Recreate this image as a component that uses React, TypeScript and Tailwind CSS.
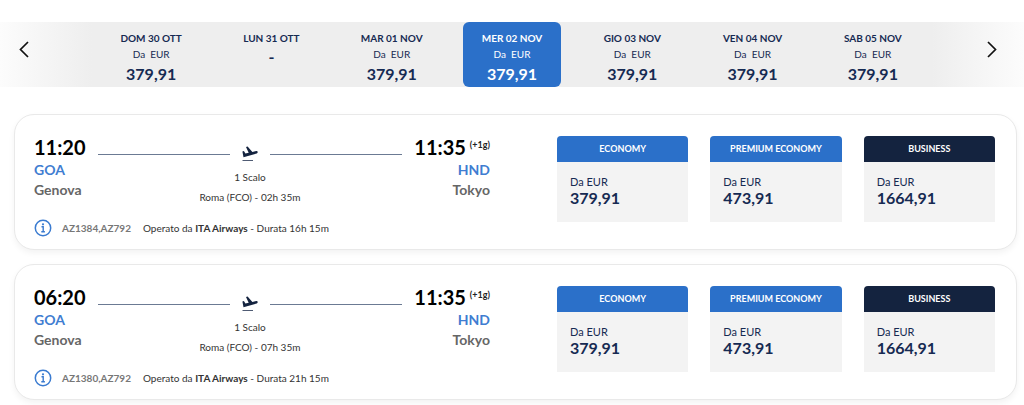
interface Day {
  label: string
  price: string | null
  selected?: boolean
}

interface Fare {
  name: string
  price: string
  dark?: boolean
}

interface Flight {
  departure: string
  arrival: string
  stopover: string
  codes: string
  duration: string
}

const days: Day[] = [
  { label: 'DOM 30 OTT', price: '379,91' },
  { label: 'LUN 31 OTT', price: null },
  { label: 'MAR 01 NOV', price: '379,91' },
  { label: 'MER 02 NOV', price: '379,91', selected: true },
  { label: 'GIO 03 NOV', price: '379,91' },
  { label: 'VEN 04 NOV', price: '379,91' },
  { label: 'SAB 05 NOV', price: '379,91' },
]

const fares: Fare[] = [
  { name: 'ECONOMY', price: '379,91' },
  { name: 'PREMIUM ECONOMY', price: '473,91' },
  { name: 'BUSINESS', price: '1664,91', dark: true },
]

const flights: Flight[] = [
  { departure: '11:20', arrival: '11:35', stopover: '02h 35m', codes: 'AZ1384,AZ792', duration: '16h 15m' },
  { departure: '06:20', arrival: '11:35', stopover: '07h 35m', codes: 'AZ1380,AZ792', duration: '21h 15m' },
]

function Chevron({ flip }: { flip?: boolean }) {
  return (
    <svg width="10" height="18" viewBox="0 0 10 18" fill="none" stroke="#111" strokeWidth="1.7" aria-hidden="true">
      <path d={flip ? 'M1 1 8.500 8.500 1 16' : 'M9 1 1.500 8.500 9 16'} />
    </svg>
  )
}

function PlaneIcon() {
  return (
    <svg width="16" height="16" viewBox="0 0 16 16" className="shrink-0" aria-hidden="true">
      <path
        fill="#14233f"
        d="M15.700 5.800c-.2-.7-.8-.9-1.400-.8l-3.900 1L5.600.5 4 .9l2.700 5.900-3.300.8L1.900 5.100.4 5.500l1.100 5.700 13.200-3.700c.7-.2 1.200-1 1-1.700z"
      />
      <path stroke="#4f5b73" strokeWidth="1" d="M.5 14.500h10.500" />
    </svg>
  )
}

function InfoIcon() {
  return (
    <svg width="18" height="18" viewBox="0 0 18 18" fill="none" aria-hidden="true">
      <circle cx="9" cy="9" r="7.700" stroke="#3a7bd0" strokeWidth="1.500" />
      <circle cx="9" cy="5.300" r="1.100" fill="#3a7bd0" />
      <path d="M7.500 7.800H9.200v4.800M7.300 12.700h3.600" stroke="#3a7bd0" strokeWidth="1.400" />
    </svg>
  )
}

function DayButton({ day }: { day: Day }) {
  return (
    <button
      type="button"
      aria-pressed={!!day.selected}
      className={`mx-auto flex w-[98px] flex-col items-center rounded-md pt-2 pb-[2px] ${
        day.selected ? 'bg-[#2b70c9] text-white' : 'text-[#162a52]'
      }`}
    >
      <span className="text-[10px] leading-4 font-bold">{day.label}</span>
      {day.price ? (
        <>
          <span className="text-[10px] leading-[17px] whitespace-pre">Da  EUR</span>
          <span className="text-base leading-[22px] font-bold">{day.price}</span>
        </>
      ) : (
        <span className="text-base leading-[22px] font-bold">-</span>
      )}
    </button>
  )
}

function FareButton({ fare }: { fare: Fare }) {
  return (
    <button type="button" className="flex flex-col overflow-hidden rounded-t bg-[#f3f3f3] text-left text-[#162a52]">
      <span
        className={`block w-full text-center text-[9px] leading-[26px] font-bold text-white ${
          fare.dark ? 'bg-[#14233f]' : 'bg-[#2b70c9]'
        }`}
      >
        {fare.name}
      </span>
      <span className="block px-[13px] pt-3 pb-4">
        <span className="block text-[11px] leading-4">Da EUR</span>
        <span className="block text-base leading-4 font-bold">{fare.price}</span>
      </span>
    </button>
  )
}

function FlightCard({ flight }: { flight: Flight }) {
  return (
    <article className="grid grid-cols-[456fr_438fr] gap-[67px] rounded-[20px] border border-[#e9e9e9] bg-white pt-[21px] pr-[21px] pb-[11px] pl-[19px] shadow-[0_3px_6px_rgba(0,0,0,0.05)]">
      <div>
        <div className="flex">
          <div>
            <p className="text-xl leading-[22px] font-bold text-black">{flight.departure}</p>
            <p className="pt-[2px] text-sm leading-5 font-bold text-[#3f7dd1]">GOA</p>
            <p className="text-sm leading-5 font-bold text-[#666]">Genova</p>
          </div>

          <div className="mx-3 flex-1 pt-2 text-center text-[10px] text-[#333]">
            <div className="mb-[3px] flex h-5 items-center gap-3">
              <span className="h-px flex-1 bg-[#6b7a93]" />
              <PlaneIcon />
              <span className="h-px flex-1 bg-[#6b7a93]" />
            </div>
            <p className="leading-5">1 Scalo</p>
            <p className="leading-5">Roma (FCO) - {flight.stopover}</p>
          </div>

          <div className="text-right">
            <p className="flex items-start gap-1 text-xl leading-[22px] font-bold text-black">
              {flight.arrival}
              <span className="text-[9px] leading-[18px] text-[#222]">(+1g)</span>
            </p>
            <p className="pt-[2px] text-sm leading-5 font-bold text-[#3f7dd1]">HND</p>
            <p className="text-sm leading-5 font-bold text-[#666]">Tokyo</p>
          </div>
        </div>

        <div className="mt-[11px] flex h-5 items-center text-[10px] text-[#333]">
          <button type="button" aria-label="Informazioni sul volo" className="mr-[10px]">
            <InfoIcon />
          </button>
          <span className="mr-3 font-bold text-[#777]">{flight.codes}</span>
          <span>
            Operato da <b>ITA Airways</b> - Durata {flight.duration}
          </span>
        </div>
      </div>

      <div className="grid grid-cols-3 items-start gap-[22px]">
        {fares.map((fare) => (
          <FareButton key={fare.name} fare={fare} />
        ))}
      </div>
    </article>
  )
}

export default function App() {
  return (
    <main className="min-h-screen bg-white pt-[22px] font-['Lato',sans-serif]">
      <nav
        aria-label="Date"
        className="flex items-center bg-[linear-gradient(to_right,#fcfcfc,#eee_9%,#eee_91%,#fcfcfc)]"
      >
        <button type="button" aria-label="Giorni precedenti" className="flex w-[91px] justify-start pb-[10px] pl-[19px]">
          <Chevron />
        </button>
        <div className="grid flex-1 grid-cols-7 items-start">
          {days.map((day) => (
            <DayButton key={day.label} day={day} />
          ))}
        </div>
        <button type="button" aria-label="Giorni successivi" className="flex w-[91px] justify-end pr-[27px] pb-[10px]">
          <Chevron flip />
        </button>
      </nav>

      <section className="mt-[27px] mr-[7px] ml-[14px] flex flex-col gap-[14px]">
        {flights.map((flight) => (
          <FlightCard key={flight.codes} flight={flight} />
        ))}
      </section>
    </main>
  )
}
